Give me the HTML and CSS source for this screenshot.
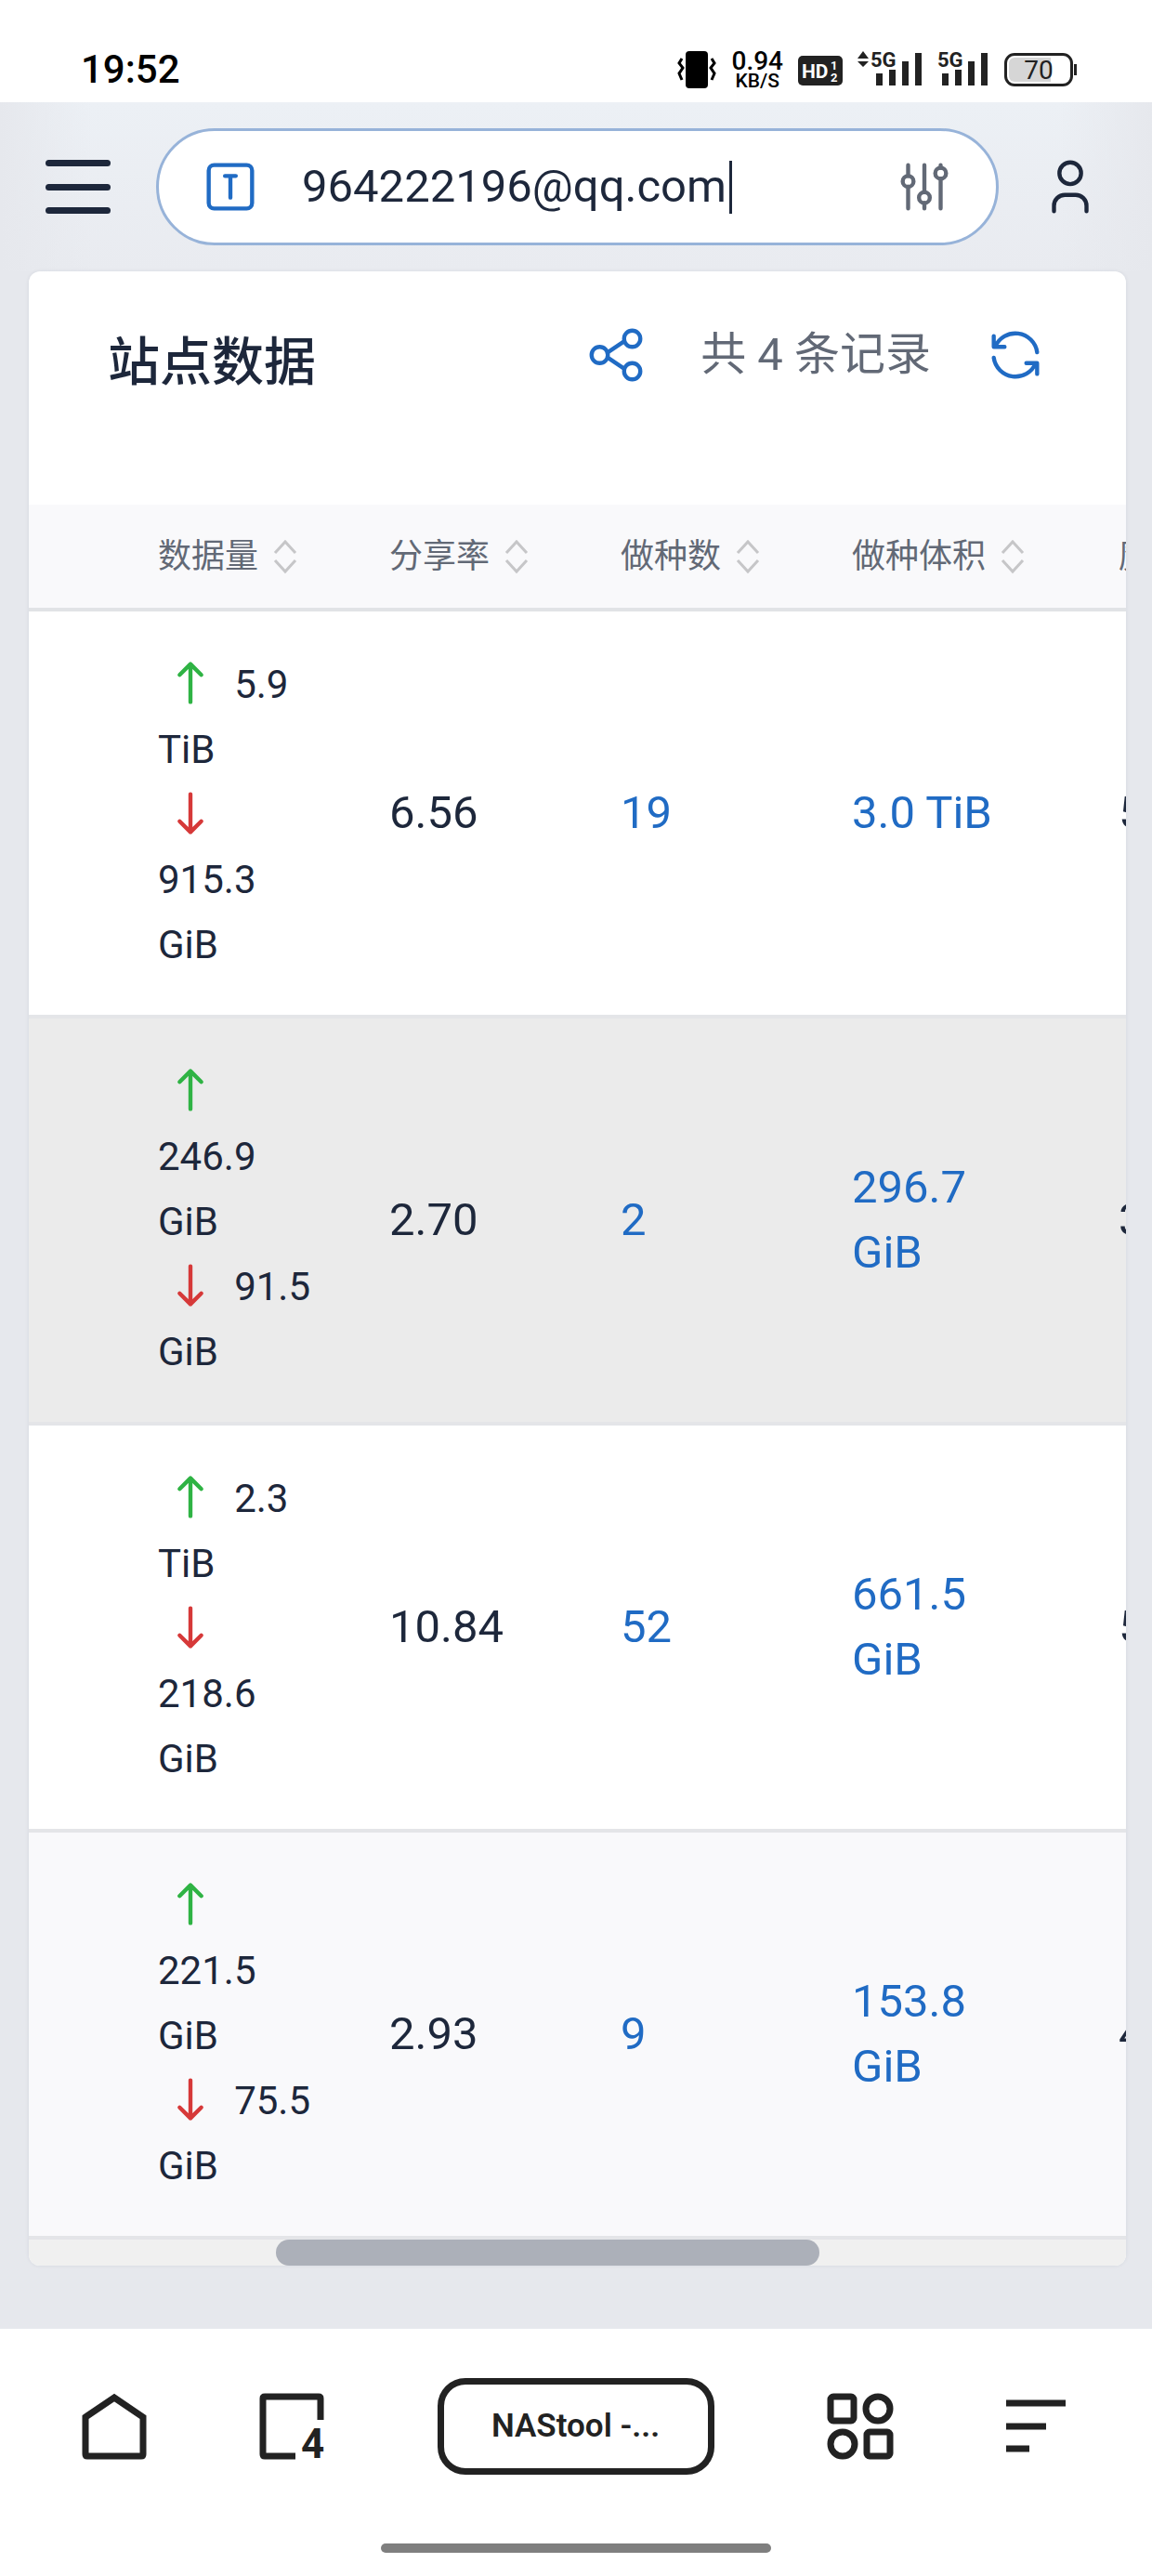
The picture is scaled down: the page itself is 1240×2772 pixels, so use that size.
FILE: index.html
```html
<!DOCTYPE html>
<html lang="zh-CN">
<head>
  <meta charset="UTF-8" />
  <meta name="viewport" content="width=device-width, initial-scale=1" />
  <title>NAStool - 站点数据</title>
  <link rel="stylesheet" href="styles.css">
</head>
<body>

<!-- Status bar -->
<div class="status-bar">
  <span class="clock">19:52</span>
  <div class="status-icons">
    <svg class="vibrate" width="42" height="40" viewBox="0 0 42 40">
      <rect x="9" y="0" width="24" height="40" rx="4" />
      <path d="M5 8L2 13L6 18L2 24L5 31M37 8L40 13L36 18L40 24L37 31" fill="none" stroke="#000" stroke-width="3" />
    </svg>
    <div class="speed"><span class="speed-value">0.94</span><span class="speed-unit">KB/S</span></div>
    <svg class="hd" width="48" height="40" viewBox="0 0 48 40">
      <rect x="0" y="5" width="48" height="32" rx="5" />
      <text x="4" y="29" font-size="21">HD</text>
      <text x="35" y="20" font-size="13">1</text>
      <text x="35" y="33" font-size="13">2</text>
    </svg>
    <svg class="signal" width="70" height="40" viewBox="0 0 70 40">
      <path d="M0 8L6 0L12 8zM0 11H12L6 17z" />
      <text x="14" y="17" font-size="22">5G</text>
      <path d="M20 24h7v13h-7zM34 20h7v17h-7zM48 11h7v26h-7zM62 2h7v35h-7z" />
    </svg>
    <svg class="signal" width="56" height="40" viewBox="0 0 56 40">
      <text x="0" y="17" font-size="22">5G</text>
      <path d="M5 24h7v13H5zM19 20h7v17h-7zM33 11h7v26h-7zM47 2h7v35h-7z" />
    </svg>
    <div class="battery"><span>70</span></div>
  </div>
</div>

<!-- Top navbar -->
<header class="navbar">
  <button class="menu-btn" aria-label="菜单"><span></span><span></span><span></span></button>
  <form class="search">
    <svg class="icon blue" viewBox="0 0 24 24"><rect x="4" y="4" width="16" height="16" rx="2" /><path d="M10 8h4M12 8v8" /></svg>
    <div class="search-text">
      <input type="text" value="964222196@qq.com" aria-label="搜索">
      <span class="caret"></span>
    </div>
    <svg class="icon gray" viewBox="0 0 24 24">
      <circle cx="6" cy="10" r="2" /><path d="M6 4v4M6 12v8" />
      <circle cx="12" cy="16" r="2" /><path d="M12 4v10M12 18v2" />
      <circle cx="18" cy="7" r="2" /><path d="M18 4v1M18 9v11" />
    </svg>
  </form>
  <button class="icon-btn" aria-label="用户">
    <svg class="icon" viewBox="0 0 24 24"><circle cx="12" cy="7" r="4" /><path d="M6 21v-2a4 4 0 0 1 4-4h4a4 4 0 0 1 4 4v2" /></svg>
  </button>
</header>

<!-- Site data -->
<main class="page">
  <section class="card">
    <div class="card-header">
      <h3>站点数据</h3>
      <div class="card-actions">
        <a href="#" aria-label="分享"><svg class="icon" viewBox="0 0 24 24"><circle cx="6" cy="12" r="3" /><circle cx="18" cy="6" r="3" /><circle cx="18" cy="18" r="3" /><path d="M9 11l6-4M9 13l6 4" /></svg></a>
        <span>共 4 条记录</span>
        <a href="#" aria-label="刷新"><svg class="icon" viewBox="0 0 24 24"><path d="M20 11a8.1 8.1 0 0 0-15.5-2M4 5v4h4M4 13a8.1 8.1 0 0 0 15.5 2M20 19v-4h-4" /></svg></a>
      </div>
    </div>

    <div class="table-wrap">
      <table>
        <colgroup>
          <col class="col-site"><col class="col"><col class="col"><col class="col"><col class="col-size"><col class="col">
        </colgroup>
        <thead>
          <tr>
            <th></th>
            <th><button>数据量<svg class="sort" viewBox="0 0 24 36"><path d="M1 14L12 2L23 14M1 22L12 34L23 22" /></svg></button></th>
            <th><button>分享率<svg class="sort" viewBox="0 0 24 36"><path d="M1 14L12 2L23 14M1 22L12 34L23 22" /></svg></button></th>
            <th><button>做种数<svg class="sort" viewBox="0 0 24 36"><path d="M1 14L12 2L23 14M1 22L12 34L23 22" /></svg></button></th>
            <th><button>做种体积<svg class="sort" viewBox="0 0 24 36"><path d="M1 14L12 2L23 14M1 22L12 34L23 22" /></svg></button></th>
            <th><button>魔力值</button></th>
          </tr>
        </thead>
        <tbody>
          <tr>
            <td></td>
            <td>
              <div><svg class="icon up" viewBox="0 0 24 24"><path d="M12 5v14M16 9l-4-4M8 9l4-4" /></svg> <span class="amount">5.9 TiB</span></div>
              <div><svg class="icon down" viewBox="0 0 24 24"><path d="M12 5v14M16 15l-4 4M8 15l4 4" /></svg> <span class="amount">915.3 GiB</span></div>
            </td>
            <td>6.56</td>
            <td><a href="#">19</a></td>
            <td><a href="#">3.0 TiB</a></td>
            <td>5</td>
          </tr>
          <tr class="hover">
            <td></td>
            <td>
              <div><svg class="icon up" viewBox="0 0 24 24"><path d="M12 5v14M16 9l-4-4M8 9l4-4" /></svg> <span class="amount">246.9 GiB</span></div>
              <div><svg class="icon down" viewBox="0 0 24 24"><path d="M12 5v14M16 15l-4 4M8 15l4 4" /></svg> <span class="amount">91.5 GiB</span></div>
            </td>
            <td>2.70</td>
            <td><a href="#">2</a></td>
            <td><a href="#">296.7 GiB</a></td>
            <td>3</td>
          </tr>
          <tr>
            <td></td>
            <td>
              <div><svg class="icon up" viewBox="0 0 24 24"><path d="M12 5v14M16 9l-4-4M8 9l4-4" /></svg> <span class="amount">2.3 TiB</span></div>
              <div><svg class="icon down" viewBox="0 0 24 24"><path d="M12 5v14M16 15l-4 4M8 15l4 4" /></svg> <span class="amount">218.6 GiB</span></div>
            </td>
            <td>10.84</td>
            <td><a href="#">52</a></td>
            <td><a href="#">661.5 GiB</a></td>
            <td>5</td>
          </tr>
          <tr class="striped">
            <td></td>
            <td>
              <div><svg class="icon up" viewBox="0 0 24 24"><path d="M12 5v14M16 9l-4-4M8 9l4-4" /></svg> <span class="amount">221.5 GiB</span></div>
              <div><svg class="icon down" viewBox="0 0 24 24"><path d="M12 5v14M16 15l-4 4M8 15l4 4" /></svg> <span class="amount">75.5 GiB</span></div>
            </td>
            <td>2.93</td>
            <td><a href="#">9</a></td>
            <td><a href="#">153.8 GiB</a></td>
            <td>4</td>
          </tr>
        </tbody>
      </table>
    </div>
    <div class="scrollbar"><div class="thumb"></div></div>
  </section>
</main>

<!-- Browser toolbar -->
<nav class="toolbar">
  <div class="toolbar-items">
    <button aria-label="主页">
      <svg width="70" height="72" viewBox="0 0 70 72"><path d="M4 26L35 5L66 26V66q0 2-2 2H6q-2 0-2-2z" /></svg>
    </button>
    <button aria-label="标签页">
      <svg width="70" height="72" viewBox="0 0 70 72"><path d="M39 68H6q-2 0-2-2V6q0-2 2-2H64q2 0 2 2V29" /><text x="45" y="70" font-size="44">4</text></svg>
    </button>
    <button class="tab-title">NAStool -...</button>
    <button aria-label="应用">
      <svg width="72" height="72" viewBox="0 0 72 72"><rect x="4" y="4" width="25" height="26" rx="3" /><circle cx="55" cy="17" r="13" /><circle cx="17" cy="55" r="13" /><rect x="43" y="42" width="25" height="26" rx="3" /></svg>
    </button>
    <button aria-label="更多">
      <svg width="64" height="72" viewBox="0 0 64 72"><path d="M0 11H64M0 36H43M0 60H25" /></svg>
    </button>
  </div>
  <div class="home-bar"></div>
</nav>

</body>
</html>
```
FILE: styles.css
```css
* {
  box-sizing: border-box;
}
body {
  margin: 0;
  min-height: 100vh;
  display: flex;
  flex-direction: column;
  font-family: Roboto, 'Noto Sans CJK SC', sans-serif;
  font-size: 49px;
  line-height: 70px;
  color: #1d273b;
  background: #e6e8ed;
}
button {
  margin: 0;
  padding: 0;
  border: none;
  background: none;
  font: inherit;
  color: inherit;
  cursor: pointer;
}
a {
  color: #206bc4;
  text-decoration: none;
}
svg {
  display: block;
  overflow: visible;
}
.icon {
  width: 70px;
  height: 70px;
  fill: none;
  stroke: currentColor;
  stroke-width: 1.5;
  stroke-linecap: round;
  stroke-linejoin: round;
  flex-shrink: 0;
}
.blue {
  color: #206bc4;
}
.gray {
  color: #626976;
}

/* status bar */
.status-bar {
  height: 110px;
  padding: 40px 85px 0 87px;
  display: flex;
  justify-content: space-between;
  background: #fff;
  color: #000;
}
.clock {
  font-size: 42px;
  font-weight: 500;
}
.status-icons {
  display: flex;
  align-items: flex-start;
  gap: 16px;
  padding-top: 15px;
  color: #222;
}
.status-icons text {
  font-weight: 700;
  fill: #222;
}
.status-icons .hd text {
  fill: #fff;
}
.hd, .signal {
  fill: #222;
}
.speed {
  display: flex;
  flex-direction: column;
  align-items: center;
  color: #000;
  font-weight: 500;
}
.speed-value {
  font-size: 28px;
  line-height: 22px;
}
.speed-unit {
  font-size: 21px;
  line-height: 20px;
}
.battery {
  position: relative;
  width: 74px;
  height: 36px;
  margin-top: 2px;
  padding: 2px;
  border: 3px solid #222;
  border-radius: 11px;
}
.battery::after {
  content: "";
  position: absolute;
  right: -7px;
  top: 9px;
  width: 3px;
  height: 12px;
  background: #222;
}
.battery span {
  display: block;
  height: 26px;
  border-radius: 6px;
  background: linear-gradient(to right, #d6d6d6 70%, #fff 70%);
  font-size: 28px;
  line-height: 28px;
  text-align: center;
}

/* navbar */
.navbar {
  height: 182px;
  padding: 0 53px 0 49px;
  display: flex;
  align-items: center;
  background: linear-gradient(to right, #e6e8ed, rgba(230, 232, 237, 0) 8%, rgba(230, 232, 237, 0) 92%, #e6e8ed), linear-gradient(#ecf0f5, #e9ebf0);
}
.menu-btn {
  width: 70px;
  height: 58px;
  display: flex;
  flex-direction: column;
  justify-content: space-between;
}
.menu-btn span {
  width: 70px;
  height: 7px;
  border-radius: 4px;
  background: #1d273b;
}
.search {
  flex: 1;
  height: 126px;
  margin: 0 42px 0 49px;
  padding: 0 42px;
  display: flex;
  align-items: center;
  border: 3px solid #97b3d9;
  border-radius: 63px;
  background: #fff;
}
.search-text {
  flex: 1;
  display: flex;
  align-items: center;
  padding-left: 42px;
}
.search input {
  width: 460px;
  field-sizing: content;
  padding: 0;
  border: none;
  outline: none;
  background: none;
  font: inherit;
  color: inherit;
}
.caret {
  width: 3px;
  height: 57px;
  background: #1d273b;
}

/* card */
.page {
  flex: 1;
  padding: 0 28px 68px 31px;
}
.card {
  overflow: hidden;
  border-radius: 12px;
  background: #fff;
  box-shadow: 0 0 4px rgba(29, 39, 59, 0.08);
}
.card-header {
  height: 251px;
  padding: 55px 84px 0 85px;
  display: flex;
  justify-content: space-between;
}
.card-header h3 {
  margin: 0;
  font-size: 56px;
  font-weight: 500;
  line-height: 86px;
}
.card-actions {
  display: flex;
  gap: 56px;
  height: 70px;
  color: #626976;
}

/* table */
.table-wrap {
  overflow: hidden;
}
table {
  width: 1394px;
  table-layout: fixed;
  border-collapse: separate;
  border-spacing: 0;
}
.col-site {
  width: 111px;
}
.col {
  width: 249px;
}
.col-size {
  width: 287px;
}
th {
  height: 115px;
  padding: 0 0 0 28px;
  border-bottom: 4px solid #e1e3e6;
  background: #f9f9fb;
  color: #626976;
  text-align: left;
}
th button {
  display: flex;
  align-items: center;
  gap: 17px;
  font-size: 36px;
  font-weight: 400;
  line-height: 42px;
}
.sort {
  width: 24px;
  height: 36px;
  fill: none;
  stroke: #c6c6c8;
  stroke-width: 3;
}
td {
  padding: 42px 54px 42px 28px;
  border-bottom: 4px solid #e4e5e8;
  vertical-align: middle;
}
td .icon {
  display: inline-block;
  vertical-align: bottom;
}
.amount {
  font-size: 42px;
  line-height: 56px;
}
.up {
  color: #2fb344;
}
.down {
  color: #d63939;
}
.hover td {
  background: #ebebeb;
}
.striped td {
  background: #f9f9fb;
}
.scrollbar {
  height: 28px;
  background: #f0f0f0;
}
.thumb {
  width: 49.6%;
  height: 28px;
  margin-left: 22.5%;
  border-radius: 14px;
  background: #acb0b9;
}

/* browser toolbar */
.toolbar {
  height: 266px;
  padding-top: 53px;
  background: #fff;
  color: #222;
}
.toolbar-items {
  display: flex;
  align-items: center;
  justify-content: space-between;
  padding: 0 93px 0 88px;
}
.toolbar svg {
  fill: none;
  stroke: #222;
  stroke-width: 7;
}
.toolbar text {
  fill: #222;
  stroke: none;
  font-weight: 700;
}
.tab-title {
  width: 298px;
  height: 104px;
  border: 7px solid #222;
  border-radius: 30px;
  font-size: 35px;
  font-weight: 600;
}
.home-bar {
  width: 420px;
  height: 10px;
  margin: 74px auto 0;
  border-radius: 5px;
  background: #7f7f7f;
}
```
